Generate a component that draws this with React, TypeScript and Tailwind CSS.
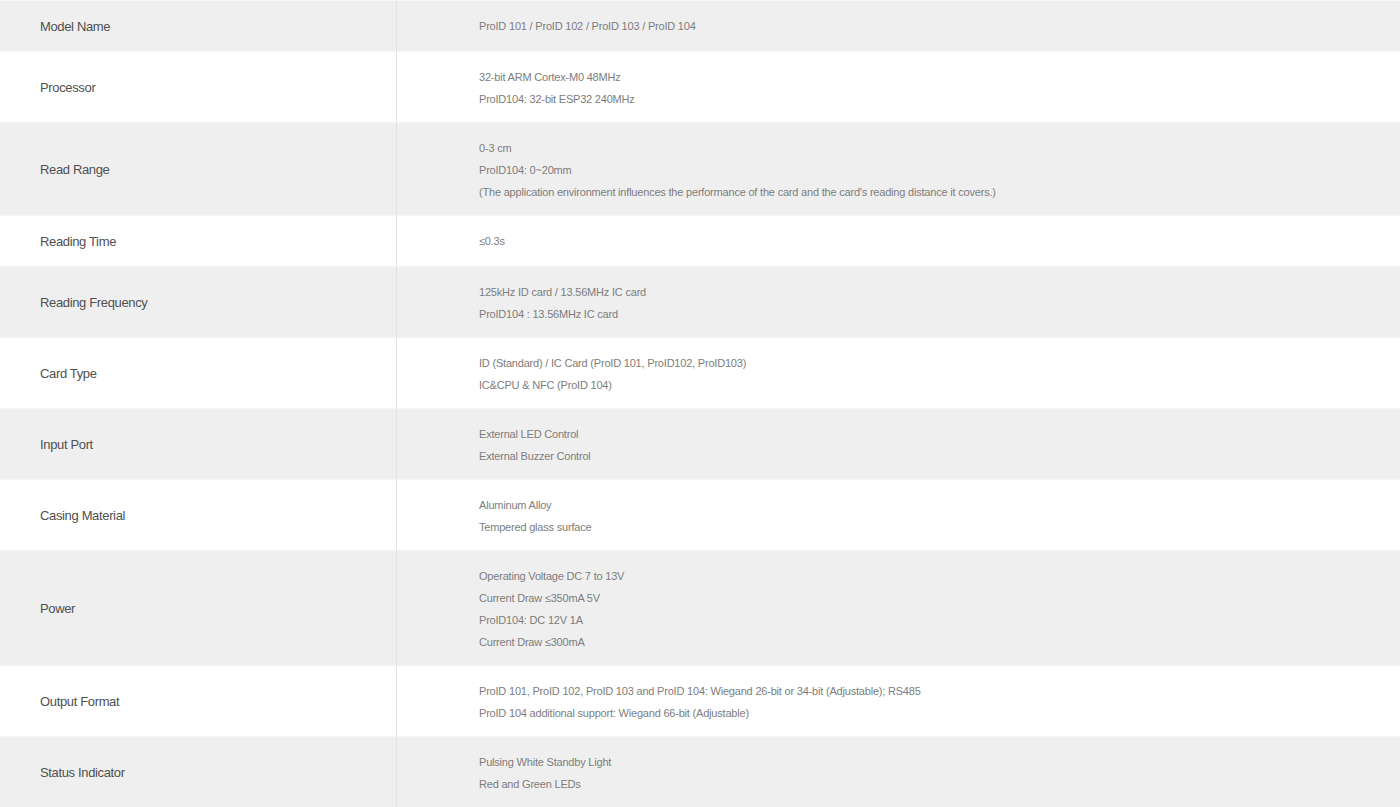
const specs: { label: string; lines: string[] }[] = [
  { label: 'Model Name', lines: ['ProID 101 / ProID 102 / ProID 103 / ProID 104'] },
  { label: 'Processor', lines: ['32-bit ARM Cortex-M0 48MHz', 'ProID104: 32-bit ESP32 240MHz'] },
  {
    label: 'Read Range',
    lines: [
      '0-3 cm',
      'ProID104: 0~20mm',
      "(The application environment influences the performance of the card and the card's reading distance it covers.)",
    ],
  },
  { label: 'Reading Time', lines: ['≤0.3s'] },
  { label: 'Reading Frequency', lines: ['125kHz ID card / 13.56MHz IC card', 'ProID104 : 13.56MHz IC card'] },
  { label: 'Card Type', lines: ['ID (Standard) / IC Card (ProID 101, ProID102, ProID103)', 'IC&CPU & NFC (ProID 104)'] },
  { label: 'Input Port', lines: ['External LED Control', 'External Buzzer Control'] },
  { label: 'Casing Material', lines: ['Aluminum Alloy', 'Tempered glass surface'] },
  {
    label: 'Power',
    lines: ['Operating Voltage DC 7 to 13V', 'Current Draw ≤350mA 5V', 'ProID104: DC 12V 1A', 'Current Draw ≤300mA'],
  },
  {
    label: 'Output Format',
    lines: [
      'ProID 101, ProID 102, ProID 103 and ProID 104: Wiegand 26-bit or 34-bit (Adjustable); RS485',
      'ProID 104 additional support: Wiegand 66-bit (Adjustable)',
    ],
  },
  { label: 'Status Indicator', lines: ['Pulsing White Standby Light', 'Red and Green LEDs'] },
];

export default function App() {
  return (
    <div className="min-h-screen bg-white font-['Liberation_Sans',Arial,sans-serif]">
      <div className="border-t border-[#f6f6f6]">
        {specs.map((row, i) => (
          <div
            key={row.label}
            className={`flex border-b border-[#f4f4f4] ${i % 2 === 0 ? 'bg-[#efefef]' : 'bg-white'}`}
          >
            <div className="flex w-[397px] shrink-0 items-center border-r border-[#e2e2e2] pt-[14px] pb-[12px] pl-10 text-[13px] leading-6 tracking-[-0.35px] text-[#505050]">
              {row.label}
            </div>
            <div className="flex-1 pt-[14px] pb-[12px] pl-[82px] text-[11px] leading-[22px] tracking-[-0.2px] text-[#7d7d7d]">
              {row.lines.map((line) => (
                <p key={line}>{line}</p>
              ))}
            </div>
          </div>
        ))}
      </div>
    </div>
  );
}
